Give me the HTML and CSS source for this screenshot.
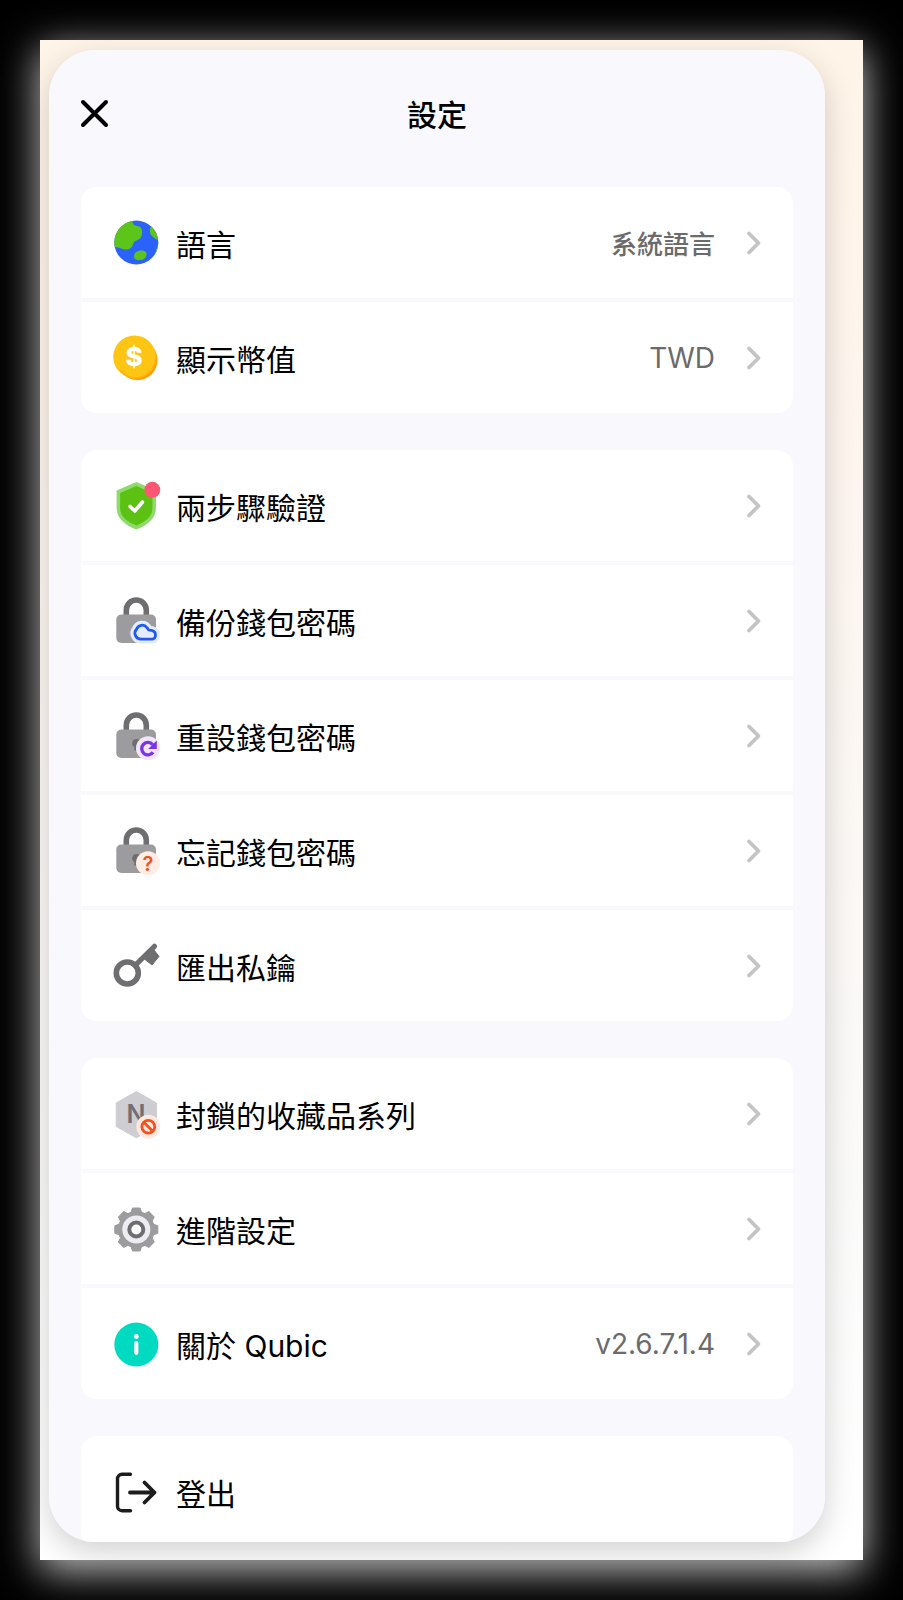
FILE: index.html
```html
<!DOCTYPE html>
<html lang="zh-Hant">
<head>
  <meta charset="UTF-8">
  <meta name="viewport" content="width=device-width, initial-scale=1.0">
  <title>設定</title>
  <link rel="stylesheet" href="styles.css">
</head>
<body>

  <!-- shared shapes -->
  <svg class="sprite" aria-hidden="true">
    <symbol id="chevron" viewBox="0 0 16 26">
      <path d="M3 3.500L12.500 13 3 22.500" fill="none" stroke="#c4c4c6" stroke-width="3.800" stroke-linecap="round" stroke-linejoin="round"/>
    </symbol>
    <symbol id="lock" viewBox="0 0 48 48">
      <path d="M14.300 19v-6a10 10 0 0 1 20 0v6" fill="none" stroke="#6e6e70" stroke-width="5.600"/>
      <rect x="4.300" y="17.500" width="39.700" height="28.500" rx="5" fill="#9c9c9f"/>
    </symbol>
    <symbol id="keyhole" viewBox="0 0 48 48">
      <path d="M24.500 27a4.300 4.300 0 0 1 2.200 8v3.500h-4.400V35a4.300 4.300 0 0 1 2.200-8z" fill="#6e6e70"/>
    </symbol>
  </svg>

  <div class="screen">
    <main class="panel">
      <header class="panel-header">
        <button class="close" type="button" aria-label="關閉">
          <svg viewBox="0 0 30 30"><path d="M2 4l23 23M25 4L2 27" fill="none" stroke="#000" stroke-width="4" stroke-linecap="round"/></svg>
        </button>
        <h1>設定</h1>
      </header>

      <nav class="groups">
        <div class="group">
          <a class="row" href="#language">
            <svg class="icon" viewBox="0 0 48 48">
              <clipPath id="globe"><circle cx="24.300" cy="23.500" r="22"/></clipPath>
              <g clip-path="url(#globe)">
                <path d="M0 0h48v48H0z" fill="#2b62fb"/>
                <path d="M0 0h20.500c-.5 4 1 6.500 4.500 7 4 .5 5.500 3 5 7 0 3.500-1 5.500-4.500 7-3 1.200-4 2.300-5 5.500-1.200 3.500-5 4.800-9 3.700C8 29 5 27.500 0 28z" fill="#5dc41a"/>
                <path d="M40 6c-2.500 3-3 7.500-.5 10.500 2 2.500 4.500 3.500 6 4.500L48 10z" fill="#5dc41a"/>
                <path d="M48 22c-2.500 4-4.500 9-5 16l5-4z" fill="#5dc41a"/>
                <path d="M22 37.500c0-4 3.500-6 7.500-6 3.500 0 5.500 1.500 5 4.500-.5 3.500-4 5.200-7.500 5.200-3 0-5-1.200-5-3.700z" fill="#5dc41a"/>
              </g>
            </svg>
            <span class="label">語言</span>
            <span class="value">系統語言</span>
            <svg class="chevron"><use href="#chevron"/></svg>
          </a>
          <a class="row" href="#currency">
            <svg class="icon" viewBox="0 0 48 48">
              <circle cx="25.500" cy="26" r="20" fill="#ff9b05"/>
              <circle cx="22.500" cy="22.800" r="21.300" fill="#ffc513"/>
              <path d="M8 36a21.300 21.300 0 0 0 14.500 8.100A21.300 21.300 0 0 0 43.600 20" fill="none" stroke="#ffb30c" stroke-width="1.500"/>
              <text class="coin-sign" x="22" y="32" text-anchor="middle">$</text>
            </svg>
            <span class="label">顯示幣值</span>
            <span class="value latin">TWD</span>
            <svg class="chevron"><use href="#chevron"/></svg>
          </a>
        </div>

        <div class="group">
          <a class="row" href="#two-step">
            <svg class="icon" viewBox="0 0 48 48">
              <path d="M24.300 0L44 8.500V26c0 10-8 17-19.700 21.500C12.500 43 4.600 36 4.600 26V8.500z" fill="#8fda6c"/>
              <path d="M24.300 4L40.500 11v15c0 8-6 13.500-16.200 17.500C14 39.500 8.100 34 8.100 26V11z" fill="#5bc213"/>
              <path d="M18 24.500l4.800 4.500 7.700-9" fill="none" stroke="#fff" stroke-width="3.600" stroke-linecap="round" stroke-linejoin="round"/>
              <circle cx="40.300" cy="7.800" r="8" fill="#ff5673"/>
            </svg>
            <span class="label">兩步驟驗證</span>
            <svg class="chevron"><use href="#chevron"/></svg>
          </a>
          <a class="row" href="#backup">
            <svg class="icon" viewBox="0 0 48 48">
              <use href="#lock"/>
              <path d="M29 42.200a6 6 0 0 1-4.500-10 6 6 0 0 1 10.500-1.500c1 1.200 1.200 2.300 2.500 2.500 4 .2 6 2 6 4.700 0 2.800-2 4.300-4.500 4.300z" fill="#e4edff" stroke="#e4edff" stroke-width="9" stroke-linejoin="round"/>
              <path d="M29 42.200a6 6 0 0 1-4.500-10 6 6 0 0 1 10.500-1.500c1 1.200 1.200 2.300 2.500 2.500 4 .2 6 2 6 4.700 0 2.800-2 4.300-4.500 4.300z" fill="none" stroke="#2058f5" stroke-width="2.800" stroke-linejoin="round"/>
            </svg>
            <span class="label">備份錢包密碼</span>
            <svg class="chevron"><use href="#chevron"/></svg>
          </a>
          <a class="row" href="#reset">
            <svg class="icon" viewBox="0 0 48 48">
              <use href="#lock"/>
              <use href="#keyhole"/>
              <circle cx="36" cy="36.300" r="12" fill="#f2e6ff"/>
              <path d="M41 40.200a6.200 6.200 0 1 1-.3-7.500" fill="none" stroke="#7a35ea" stroke-width="3.300"/>
              <path d="M44.800 28.500v8.500h-8.600z" fill="#7a35ea"/>
            </svg>
            <span class="label">重設錢包密碼</span>
            <svg class="chevron"><use href="#chevron"/></svg>
          </a>
          <a class="row" href="#forgot">
            <svg class="icon" viewBox="0 0 48 48">
              <use href="#lock"/>
              <use href="#keyhole"/>
              <circle cx="36" cy="36.300" r="12" fill="#ffece3"/>
              <text class="help-sign" x="36" y="44" text-anchor="middle">?</text>
            </svg>
            <span class="label">忘記錢包密碼</span>
            <svg class="chevron"><use href="#chevron"/></svg>
          </a>
          <a class="row" href="#export">
            <svg class="icon" viewBox="0 0 48 48">
              <circle cx="15.300" cy="31" r="11" fill="none" stroke="#6e6e70" stroke-width="5.600"/>
              <path d="M23.500 23L42.500 4.300" fill="none" stroke="#6e6e70" stroke-width="5.200" stroke-linecap="round"/>
              <path d="M32.500 17l7.500 6 7-8.500-5-6.500z" fill="#6e6e70" stroke="#6e6e70" stroke-linejoin="round"/>
            </svg>
            <span class="label">匯出私鑰</span>
            <svg class="chevron"><use href="#chevron"/></svg>
          </a>
        </div>

        <div class="group">
          <a class="row" href="#blocked">
            <svg class="icon" viewBox="0 0 48 48">
              <path d="M24.300 1.500L44.500 13v23.500L24.300 47.800 4.200 36.500V13z" fill="#cdcdd2" stroke="#cdcdd2" stroke-linejoin="round"/>
              <text class="series-sign" x="24" y="33" text-anchor="middle">N</text>
              <circle cx="36.300" cy="36.800" r="12" fill="#ffe8df"/>
              <circle cx="36.300" cy="36.800" r="6.400" fill="none" stroke="#f4511e" stroke-width="2.800"/>
              <path d="M31.800 32.300l9 9" fill="none" stroke="#f4511e" stroke-width="2.800"/>
            </svg>
            <span class="label">封鎖的收藏品系列</span>
            <svg class="chevron"><use href="#chevron"/></svg>
          </a>
          <a class="row" href="#advanced">
            <svg class="icon" viewBox="0 0 48 48">
              <g fill="#9c9c9f" stroke="#9c9c9f" stroke-linejoin="round">
                <circle cx="24.300" cy="24.500" r="18"/>
                <path id="teeth" d="M20.500 3h7.600l2 6v31l-2 6h-7.600l-2-6V9z"/>
                <use href="#teeth" transform="rotate(45 24.300 24.500)"/>
                <use href="#teeth" transform="rotate(90 24.300 24.500)"/>
                <use href="#teeth" transform="rotate(135 24.300 24.500)"/>
              </g>
              <circle cx="24.300" cy="24.500" r="14" fill="#ececf1"/>
              <circle cx="24.300" cy="24.500" r="7" fill="#fff" stroke="#6e6e70" stroke-width="4"/>
            </svg>
            <span class="label">進階設定</span>
            <svg class="chevron"><use href="#chevron"/></svg>
          </a>
          <a class="row" href="#about">
            <svg class="icon" viewBox="0 0 48 48">
              <circle cx="24.300" cy="24.500" r="22" fill="#00dac0"/>
              <circle cx="24.300" cy="16.500" r="2.400" fill="#fff"/>
              <path d="M24.300 23v9.800" fill="none" stroke="#fff" stroke-width="4.200" stroke-linecap="round"/>
            </svg>
            <span class="label">關於 Qubic</span>
            <span class="value latin">v2.6.7.1.4</span>
            <svg class="chevron"><use href="#chevron"/></svg>
          </a>
        </div>

        <div class="group">
          <a class="row" href="#logout">
            <svg class="icon" viewBox="0 0 48 48" fill="none" stroke="#1c1c1c" stroke-linecap="round" stroke-linejoin="round">
              <path d="M18.500 6.300H10a4.500 4.500 0 0 0-4.500 4.500v27.400a4.500 4.500 0 0 0 4.500 4.500h8.500" stroke-width="3.400"/>
              <path d="M18 24.500h24.500M32.500 14.500l10 10-10 10" stroke-width="3.800"/>
            </svg>
            <span class="label">登出</span>
          </a>
        </div>
      </nav>
    </main>
  </div>

</body>
</html>
```

FILE: styles.css
```css
* {
  box-sizing: border-box;
}

body {
  margin: 0;
  padding: 40px;
  background-color: black;
  color: black;
  font-family: Inter, "Noto Sans CJK TC", sans-serif;
}

.sprite {
  display: none;
}

.screen {
  display: flex;
  height: calc(100vh - 80px);
  padding: 10px 38px 18px 9px;
  background: linear-gradient(#fff4e8, #fdf5ef 30%, #fafaf9 75%, #fff);
  box-shadow: 0 10px 38px rgba(255, 255, 255, 0.8);
}

.panel {
  flex: 1;
  padding: 0 32px;
  overflow-y: auto;
  scrollbar-width: none;
  background-color: #f8f8fd;
  border-radius: 46px;
  box-shadow: 0 10px 30px rgba(0, 0, 0, 0.18);
}

.panel-header {
  display: grid;
  grid-template-columns: 1fr auto 1fr;
  align-items: center;
  height: 125px;
  margin-bottom: 12px;
}

.panel-header h1 {
  margin: 0;
  font-size: 30px;
  font-weight: 500;
}

.close {
  width: 30px;
  height: 30px;
  padding: 0;
  border: none;
  background: none;
  cursor: pointer;
}

.close svg {
  display: block;
  overflow: visible;
}

.groups {
  display: flex;
  flex-direction: column;
  gap: 37px;
}

.group {
  display: grid;
  gap: 4px;
  border-radius: 16px;
  overflow: hidden;
}

.row {
  display: flex;
  align-items: center;
  height: 111px;
  padding: 0 31px;
  background-color: white;
  color: black;
  text-decoration: none;
}

.row:hover {
  background-color: #fdfdff;
}

.icon {
  width: 48px;
  height: 48px;
  margin-right: 16px;
  overflow: visible;
}

.label {
  flex: 1;
  font-size: 30px;
}

.value {
  color: #6b6b6b;
  font-size: 26px;
  font-weight: 500;
}

.latin {
  font-size: 28px;
  font-weight: 400;
}

.chevron {
  width: 16px;
  height: 26px;
  margin-left: 31px;
}

.coin-sign {
  fill: white;
  font-size: 26px;
  font-weight: 800;
}

.help-sign {
  fill: #f4511e;
  font-size: 20px;
  font-weight: 600;
}

.series-sign {
  fill: #707074;
  font-size: 25px;
  font-weight: 600;
}
```
